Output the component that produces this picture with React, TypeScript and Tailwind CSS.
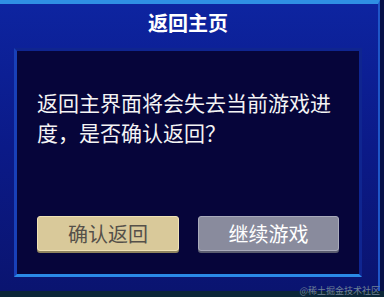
export default function App() {
  return (
    <div
      className="relative flex h-[297px] w-[384px] flex-col overflow-hidden bg-[#061048]"
      style={{ fontFamily: '"Noto Sans CJK SC", "Noto Sans", sans-serif' }}
    >
      <div className="flex h-[291px] w-[380px] flex-col border-t-[4px] border-r-[2px] border-t-[#2f8fe4] border-r-[#1f56c8] bg-gradient-to-b from-[#0d24a0] via-[#0b1a88] to-[#0a1470] pb-[14px] pl-[14px] pr-[16px]">
        <div className="flex h-[44px] items-center justify-center pb-[6px]">
          <h1 className="text-[20px] font-bold leading-none text-white">返回主页</h1>
        </div>

        <div className="flex flex-1 flex-col border-[3px] border-[#0f2590] border-b-[#2a8ae6] border-l-[#1840b8] bg-[#06053a] px-[20px] pb-[23px] pt-[36px]">
          <p className="text-[21px] leading-[30px] text-[#f4f4f4]">
            返回主界面将会失去当前游戏进度，是否确认返回？
          </p>

          <div className="mt-auto flex justify-between">
            <button className="flex h-[35px] w-[142px] items-center justify-center rounded-[3px] border border-[#efe2b6] bg-[#d9c99a] text-[20px] text-[#555049] shadow-[0_2px_0_#8f845f]">
              确认返回
            </button>
            <button className="flex h-[35px] w-[141px] items-center justify-center rounded-[3px] border border-[#a9abbb] bg-[#898b9d] text-[20px] text-white shadow-[0_2px_0_#5b5d70]">
              继续游戏
            </button>
          </div>
        </div>
      </div>

      <div className="flex-1 bg-[#0b2638]" />

      <span className="absolute bottom-[2px] right-[4px] text-[9px] leading-none text-[#6f8196]">
        @稀土掘金技术社区
      </span>
    </div>
  )
}
